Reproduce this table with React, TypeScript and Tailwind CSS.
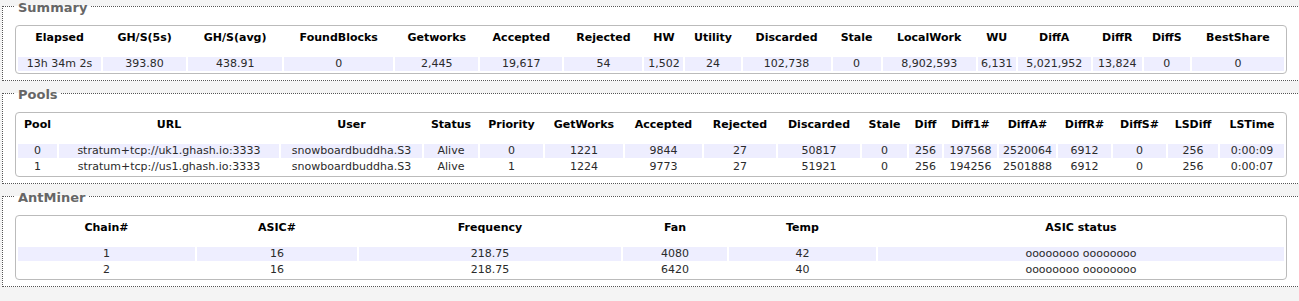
import React from 'react';

interface Section {
  title: string;
  cols: string[];
  widths: string[];
  rows: string[][];
}

const sections: Section[] = [
  {
    title: 'Summary',
    cols: ['Elapsed', 'GH/S(5s)', 'GH/S(avg)', 'FoundBlocks', 'Getworks', 'Accepted', 'Rejected', 'HW', 'Utility', 'Discarded', 'Stale', 'LocalWork', 'WU', 'DiffA', 'DiffR', 'DiffS', 'BestShare'],
    widths: ['w-[83px]', 'w-[83px]', 'w-[94px]', 'w-[109px]', 'w-[83px]', 'w-[82px]', 'w-[78px]', 'w-[39px]', 'w-[55px]', 'w-[88px]', 'w-[48px]', 'w-[93px]', 'w-[38px]', 'w-[73px]', 'w-[49px]', 'w-[46px]', 'w-[92px]'],
    rows: [
      ['13h 34m 2s', '393.80', '438.91', '0', '2,445', '19,617', '54', '1,502', '24', '102,738', '0', '8,902,593', '6,131', '5,021,952', '13,824', '0', '0'],
    ],
  },
  {
    title: 'Pools',
    cols: ['Pool', 'URL', 'User', 'Status', 'Priority', 'GetWorks', 'Accepted', 'Rejected', 'Discarded', 'Stale', 'Diff', 'Diff1#', 'DiffA#', 'DiffR#', 'DiffS#', 'LSDiff', 'LSTime'],
    widths: ['w-[39px]', 'w-[220px]', 'w-[141px]', 'w-[54px]', 'w-[63px]', 'w-[78px]', 'w-[77px]', 'w-[72px]', 'w-[82px]', 'w-[45px]', 'w-[33px]', 'w-[53px]', 'w-[57px]', 'w-[53px]', 'w-[53px]', 'w-[50px]', 'w-[64px]'],
    rows: [
      ['0', 'stratum+tcp://uk1.ghash.io:3333', 'snowboardbuddha.S3', 'Alive', '0', '1221', '9844', '27', '50817', '0', '256', '197568', '2520064', '6912', '0', '256', '0:00:09'],
      ['1', 'stratum+tcp://us1.ghash.io:3333', 'snowboardbuddha.S3', 'Alive', '1', '1224', '9773', '27', '51921', '0', '256', '194256', '2501888', '6912', '0', '256', '0:00:07'],
    ],
  },
  {
    title: 'AntMiner',
    cols: ['Chain#', 'ASIC#', 'Frequency', 'Fan', 'Temp', 'ASIC status'],
    widths: ['w-[177px]', 'w-[160px]', 'w-[262px]', 'w-[104px]', 'w-[147px]', 'w-[406px]'],
    rows: [
      ['1', '16', '218.75', '4080', '42', 'oooooooo oooooooo'],
      ['2', '16', '218.75', '6420', '40', 'oooooooo oooooooo'],
    ],
  },
];

function StatusSection({ s, first }: { s: Section; first: boolean }) {
  return (
    <fieldset className={`${first ? '' : 'mt-[6px]'} ml-[2px] w-[1330px] border border-dotted border-[#555] bg-white pl-[12px] pr-0 pt-[13px] pb-[6px]`}>
      <legend className="h-[12px] px-[3px] pt-[2px] box-border text-[13px] leading-[12px] font-bold text-[#666]">
        {s.title}
      </legend>
      <div className="w-[1272px] border border-[#bbb] rounded-[4px]">
        <table className="w-[1270px] table-fixed border-separate border-spacing-[2px] text-[11px]">
          <colgroup>
            {s.widths.map((w, i) => (
              <col key={i} className={w} />
            ))}
          </colgroup>
          <thead>
            <tr>
              {s.cols.map((c) => (
                <th key={c} className="p-0 pt-[3px] pb-[10px] leading-[14px] font-bold text-black text-center align-top whitespace-nowrap">
                  {c}
                </th>
              ))}
            </tr>
          </thead>
          <tbody>
            {s.rows.map((r, ri) => (
              <tr key={ri} className={ri === 0 ? 'bg-[#eeeeff]' : 'bg-white'}>
                {r.map((v, ci) => (
                  <td key={ci} className="p-0 h-[14px] leading-[14px] text-center text-[#2a2a2a] whitespace-nowrap">
                    {v}
                  </td>
                ))}
              </tr>
            ))}
          </tbody>
        </table>
      </div>
    </fieldset>
  );
}

export default function App() {
  return (
    <div className="min-h-screen w-full overflow-hidden bg-[#f4f4f4] font-['DejaVu_Sans',Verdana,sans-serif]">
      {sections.map((s, i) => (
        <StatusSection key={s.title} s={s} first={i === 0} />
      ))}
    </div>
  );
}
